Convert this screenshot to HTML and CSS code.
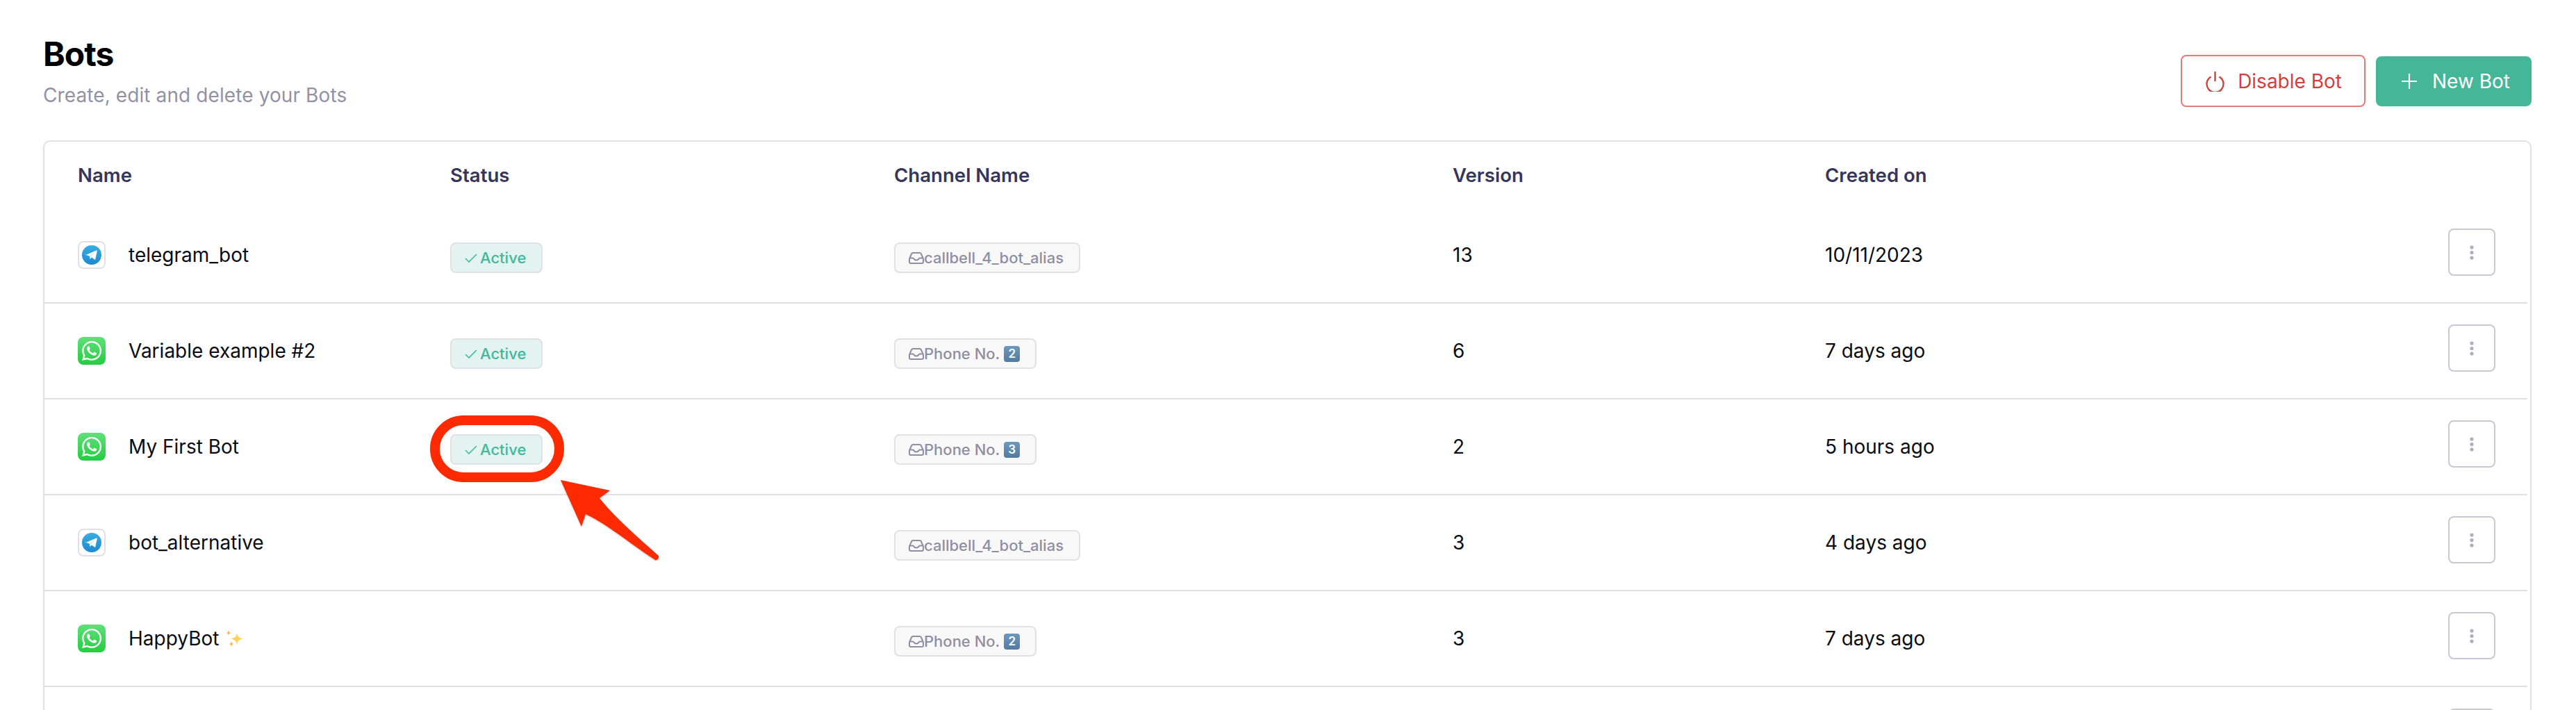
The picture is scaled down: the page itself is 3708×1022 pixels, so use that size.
FILE: index.html
```html
<!DOCTYPE html>
<html lang="en">
<head>
  <meta charset="UTF-8">
  <title>Bots</title>
  <link rel="stylesheet" href="styles.css">
</head>
<body>

<!-- shared icons -->
<svg class="icon-defs" width="0" height="0">
  <defs>
    <linearGradient id="tgBlue" x1="0" y1="0" x2="0" y2="1">
      <stop offset="0" stop-color="#37aee2"/>
      <stop offset="1" stop-color="#1e88d0"/>
    </linearGradient>
    <linearGradient id="waGreen" x1="0" y1="0" x2="0" y2="1">
      <stop offset="0" stop-color="#5fe07a"/>
      <stop offset="1" stop-color="#25cc40"/>
    </linearGradient>
    <symbol id="i-telegram" viewBox="0 0 28 28">
      <circle cx="14" cy="14" r="14" fill="url(#tgBlue)"/>
      <path d="M5 14.2 20.6 7.6c.7-.3 1.3.2 1.1 1l-2.3 11.3c-.2.8-.8 1-1.4.6l-4-3-2 1.9c-.4.4-.8.2-.8-.4l-.2-3.3-6-2.3c-.7-.2-.7-.9 0-1.200z" fill="#fff"/>
      <path d="M11 15.600 18.500 10.600 13 16.500z" fill="#cfe3f3"/>
    </symbol>
    <symbol id="i-whatsapp" viewBox="0 0 40 40">
      <rect width="40" height="40" rx="8" fill="url(#waGreen)"/>
      <g transform="translate(6 6) scale(1.17)">
        <path fill="#fff" d="M17.472 14.382c-.297-.149-1.758-.867-2.03-.967-.273-.099-.471-.148-.67.15-.197.297-.767.966-.94 1.164-.173.199-.347.223-.644.075-.297-.15-1.255-.463-2.39-1.475-.883-.788-1.48-1.761-1.653-2.059-.173-.297-.018-.458.13-.606.134-.133.298-.347.446-.52.149-.174.198-.298.298-.497.099-.198.05-.371-.025-.52-.075-.149-.669-1.612-.916-2.207-.242-.579-.487-.5-.669-.51-.173-.008-.371-.01-.57-.01-.198 0-.52.074-.792.372-.272.297-1.04 1.016-1.04 2.479 0 1.462 1.065 2.875 1.213 3.074.149.198 2.096 3.2 5.077 4.487.709.306 1.262.489 1.694.625.712.227 1.36.195 1.871.118.571-.085 1.758-.719 2.006-1.413.248-.694.248-1.289.173-1.413-.074-.124-.272-.198-.57-.347m-5.421 7.403h-.004a9.87 9.87 0 01-5.031-1.378l-.361-.214-3.741.982.998-3.648-.235-.374a9.86 9.86 0 01-1.51-5.26c.001-5.45 4.436-9.884 9.888-9.884 2.64 0 5.122 1.03 6.988 2.898a9.825 9.825 0 012.893 6.994c-.003 5.45-4.437 9.884-9.885 9.884m8.413-18.297A11.815 11.815 0 0012.05 0C5.495 0 .16 5.335.157 11.892c0 2.096.547 4.142 1.588 5.945L.057 24l6.305-1.654a11.882 11.882 0 005.683 1.448h.005c6.554 0 11.89-5.335 11.893-11.893a11.821 11.821 0 00-3.48-8.413z"/>
      </g>
    </symbol>
    <symbol id="i-check" viewBox="0 0 18 13">
      <path d="M1 7l5 5L17 1" fill="none" stroke="currentColor" stroke-width="1.600"/>
    </symbol>
    <symbol id="i-inbox" viewBox="0 0 22 17">
      <path d="M1 9.500 4 2.500C4.500 1.500 5.200 1 6.200 1h9.600c1 0 1.700.5 2.200 1.500l3 7v4.500c0 1.200-.8 2-2 2H3c-1.200 0-2-.8-2-2zM1 8.500h5c.8 0 1.200.4 1.500 1 .6 1.200 1.800 2 3.500 2s2.900-.8 3.500-2c.3-.6.7-1 1.500-1h5" fill="none" stroke="currentColor" stroke-width="2"/>
    </symbol>
    <symbol id="i-more" viewBox="0 0 8 28">
      <circle cx="4" cy="4" r="3.500" fill="currentColor"/>
      <circle cx="4" cy="14" r="3.500" fill="currentColor"/>
      <circle cx="4" cy="24" r="3.500" fill="currentColor"/>
    </symbol>
  </defs>
</svg>

<div class="page">
  <div class="page-head">
    <div>
      <h1>Bots</h1>
      <p class="subtitle">Create, edit and delete your Bots</p>
    </div>
    <div class="actions">
      <button class="btn btn-disable">
        <svg class="btn-power" viewBox="0 0 27 30"><path d="M7.500 8.500a12 12 0 1 0 12 0M13.500 1v14" fill="none" stroke="currentColor" stroke-width="2.400"/></svg>
        Disable Bot
      </button>
      <button class="btn btn-new">
        <svg class="btn-plus" viewBox="0 0 22 22"><path d="M11 0v22M0 11h22" fill="none" stroke="currentColor" stroke-width="2.200"/></svg>
        New Bot
      </button>
    </div>
  </div>

  <div class="card">
    <div class="row row-head">
      <div>Name</div>
      <div>Status</div>
      <div>Channel Name</div>
      <div>Version</div>
      <div>Created on</div>
    </div>

    <div class="row">
      <div class="name">
        <span class="tg-box"><svg class="tg-icon"><use href="#i-telegram"/></svg></span>
        telegram_bot
      </div>
      <div><span class="tag tag-active"><svg class="tag-check"><use href="#i-check"/></svg>Active</span></div>
      <div><span class="tag tag-channel"><svg class="tag-inbox"><use href="#i-inbox"/></svg>callbell_4_bot_alias</span></div>
      <div>13</div>
      <div>10/11/2023</div>
      <button class="more"><svg class="more-icon"><use href="#i-more"/></svg></button>
    </div>

    <div class="row">
      <div class="name">
        <svg class="wa-icon"><use href="#i-whatsapp"/></svg>
        Variable example #2
      </div>
      <div><span class="tag tag-active"><svg class="tag-check"><use href="#i-check"/></svg>Active</span></div>
      <div><span class="tag tag-channel"><svg class="tag-inbox"><use href="#i-inbox"/></svg>Phone No.<span class="keycap">2</span></span></div>
      <div>6</div>
      <div>7 days ago</div>
      <button class="more"><svg class="more-icon"><use href="#i-more"/></svg></button>
    </div>

    <div class="row">
      <div class="name">
        <svg class="wa-icon"><use href="#i-whatsapp"/></svg>
        My First Bot
      </div>
      <div><span class="tag tag-active"><svg class="tag-check"><use href="#i-check"/></svg>Active</span></div>
      <div><span class="tag tag-channel"><svg class="tag-inbox"><use href="#i-inbox"/></svg>Phone No.<span class="keycap">3</span></span></div>
      <div>2</div>
      <div>5 hours ago</div>
      <button class="more"><svg class="more-icon"><use href="#i-more"/></svg></button>
    </div>

    <div class="row">
      <div class="name">
        <span class="tg-box"><svg class="tg-icon"><use href="#i-telegram"/></svg></span>
        bot_alternative
      </div>
      <div></div>
      <div><span class="tag tag-channel"><svg class="tag-inbox"><use href="#i-inbox"/></svg>callbell_4_bot_alias</span></div>
      <div>3</div>
      <div>4 days ago</div>
      <button class="more"><svg class="more-icon"><use href="#i-more"/></svg></button>
    </div>

    <div class="row">
      <div class="name">
        <svg class="wa-icon"><use href="#i-whatsapp"/></svg>
        <span>HappyBot</span>
        <svg class="sparkles" viewBox="0 0 24 24">
          <path d="M15 4c.8 5 2.500 7.200 9 8.500-6.500 1.300-8.200 3.500-9 8.500-.8-5-2.500-7.200-9-8.500 6.500-1.300 8.200-3.500 9-8.500z" fill="#fdd35c"/>
          <path d="M3 0c.4 2.500 1 3.400 3 4-2 .6-2.600 1.500-3 4-.4-2.500-1-3.400-3-4 2-.6 2.600-1.500 3-4z" fill="#fbb13c"/>
          <path d="M7 16c.4 2.500 1 3.400 3 4-2 .6-2.600 1.500-3 4-.4-2.500-1-3.400-3-4 2-.6 2.600-1.500 3-4z" fill="#fbb13c"/>
        </svg>
      </div>
      <div></div>
      <div><span class="tag tag-channel"><svg class="tag-inbox"><use href="#i-inbox"/></svg>Phone No.<span class="keycap">2</span></span></div>
      <div>3</div>
      <div>7 days ago</div>
      <button class="more"><svg class="more-icon"><use href="#i-more"/></svg></button>
    </div>

    <div class="row">
      <div></div><div></div><div></div><div></div><div></div>
      <button class="more"><svg class="more-icon"><use href="#i-more"/></svg></button>
    </div>
  </div>
</div>

<!-- red callout drawn on top of the screenshot -->
<svg class="callout" viewBox="0 0 3708 1022">
  <rect x="626" y="605" width="179" height="82" rx="41" fill="none" stroke="#ff2a00" stroke-width="14"/>
  <path class="callout-arrow" d="M807 691 878 706 863 717C885 745 920 775 948 800 949 804 946 807 943 806 910 785 875 755 843 740L837 758z" fill="#ff2a00"/>
</svg>

</body>
</html>
```

FILE: styles.css
```css
html, body {
  margin: 0;
  padding: 0;
  height: 1022px;
  overflow: hidden;
  background: white;
}
body {
  font-family: Inter, "Liberation Sans", sans-serif;
  font-size: 28px;
  color: #0b0b12;
  position: relative;
}
.icon-defs { position: absolute; }

.page { padding: 50px 64px 0 62px; }
.page-head {
  display: flex;
  justify-content: space-between;
  height: 152px;
}
h1 {
  margin: 0;
  font-size: 48px;
  line-height: 56px;
  font-weight: 700;
  color: black;
  letter-spacing: -1px;
}
.subtitle {
  margin: 13px 0 0;
  font-size: 28px;
  line-height: 36px;
  letter-spacing: 0.1px;
  color: #9291a5;
}
.actions {
  display: flex;
  align-items: center;
  gap: 15px;
  margin-top: 29px;
  height: 75px;
}
.btn {
  display: flex;
  align-items: center;
  font: inherit;
  border-radius: 8px;
  box-sizing: border-box;
}
.btn-disable {
  height: 75px;
  padding: 0 32px 0 34px;
  gap: 19px;
  background: white;
  color: #d23f3f;
  border: 2px solid #e67a7a;
}
.btn-new {
  height: 72px;
  padding: 0 31px 0 37px;
  gap: 22px;
  background: #45b799;
  color: white;
  border: none;
}
.btn-power { width: 27px; height: 30px; }
.btn-plus { width: 22px; height: 22px; }

.card {
  border: 2px solid #e1e0e8;
  border-radius: 10px;
}
.row {
  display: grid;
  grid-template-columns: 536px 639px 804px 536px 1fr auto;
  align-items: center;
  height: 138px;
  box-sizing: border-box;
  margin-right: 4px;
  padding: 0 46px 0 48px;
  border-bottom: 2px solid #e1e0e8;
}
.row:last-child { border-bottom: none; }
.row-head {
  height: 95px;
  border-bottom: none;
  font-size: 27.6px;
  font-weight: 600;
  color: #37365a;
}
.name {
  display: flex;
  align-items: center;
  gap: 33px;
}
.tg-box {
  display: flex;
  align-items: center;
  justify-content: center;
  width: 40px;
  height: 40px;
  box-sizing: border-box;
  border: 2px solid #e1e0e8;
  border-radius: 8px;
}
.tg-icon { width: 28px; height: 28px; }
.wa-icon { width: 40px; height: 40px; }
.sparkles { width: 24px; height: 24px; margin-left: -22px; }

.tag {
  display: inline-flex;
  align-items: center;
  height: 44px;
  box-sizing: border-box;
  margin-top: 8px;
  padding: 0 22px 0 19px;
  border: 2px solid #e1e0e8;
  border-radius: 8px;
  font-size: 22px;
  font-weight: 500;
  vertical-align: middle;
}
.tag-active {
  gap: 4px;
  background: #e3f3ef;
  color: #43b89a;
}
.tag-channel {
  background: #f8f8f9;
  color: #8f8ea3;
}
.tag-check { width: 18px; height: 13px; }
.tag-inbox { width: 22px; height: 17px; }
.keycap {
  display: inline-flex;
  align-items: center;
  justify-content: center;
  width: 23px;
  height: 23px;
  margin-left: 6px;
  border-radius: 4px;
  background: linear-gradient(#6d98bd, #537a9f);
  color: white;
  font-size: 17px;
  font-weight: 600;
}

.more {
  display: flex;
  align-items: center;
  justify-content: center;
  width: 68px;
  height: 68px;
  margin-bottom: 8px;
  padding: 0;
  box-sizing: border-box;
  background: white;
  border: 2px solid #c8c8d6;
  border-radius: 8px;
  color: #b0afc0;
}
.more-icon { width: 6px; height: 25px; }

.callout {
  position: absolute;
  left: 0;
  top: 0;
  width: 3708px;
  height: 1022px;
  pointer-events: none;
}
.callout-arrow { filter: drop-shadow(0 1px 1px rgba(0,0,0,0.25)); }
```
